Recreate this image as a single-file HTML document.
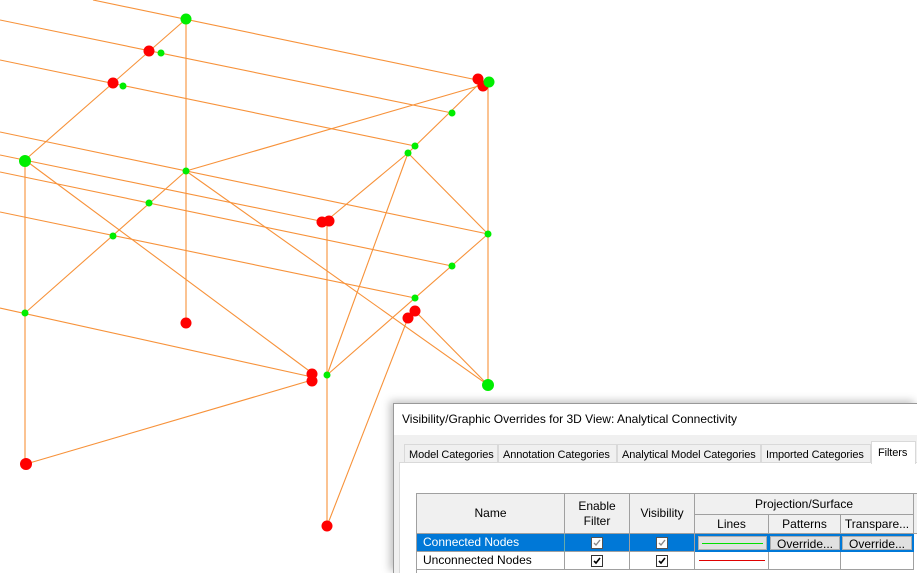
<!DOCTYPE html>
<html><head><meta charset="utf-8"><style>
*{margin:0;padding:0;box-sizing:border-box}
html,body{width:917px;height:573px;overflow:hidden}
body{background:#fff;position:relative;font-family:"Liberation Sans",sans-serif;font-size:12px;color:#000}
svg{position:absolute;left:0;top:0}
.dlg{position:absolute;left:393px;top:403px;width:524px;height:170px;background:#f0f0f0;border-left:1px solid #999;border-top:1px solid #999;box-shadow:-3px -2px 8px rgba(0,0,0,.25);overflow:hidden}
.title{position:absolute;left:0;top:0;right:0;height:31px;background:#fff;padding:8px 0 0 8px;font-size:12px}
.tab{position:absolute;top:40px;height:19px;background:#f0f0f0;border:1px solid #d9d9d9;border-bottom:none;font-size:11px;padding:4px 0 0 4px;white-space:nowrap;overflow:hidden;letter-spacing:-0.1px}
.content{position:absolute;left:5px;top:58px;width:530px;height:130px;background:#fff;border:1px solid #d9d9d9}
.c{position:absolute;border-right:1px solid #a0a0a0;border-bottom:1px solid #a0a0a0;font-size:12px;display:flex;align-items:center;justify-content:center;text-align:center;line-height:15px}
.h{background:#f0f0f0}
.cb{width:12px;height:12px;border:1px solid #333;background:#fff;display:flex;align-items:center;justify-content:center}
.btn{position:absolute;background:#e1e1e1;border:1px solid #adadad;font-size:12px;text-align:center;line-height:14px}
</style></head><body>
<svg width="917" height="573" viewBox="0 0 917 573">
<g stroke="#f7923a" stroke-width="1.1" fill="none">
<line x1="93" y1="0" x2="482" y2="81"/>
<line x1="0" y1="20" x2="452" y2="113"/>
<line x1="0" y1="60" x2="415" y2="146"/>
<line x1="0" y1="132" x2="488" y2="234"/>
<line x1="0" y1="155" x2="325" y2="222"/>
<line x1="0" y1="172" x2="452" y2="266"/>
<line x1="0" y1="212" x2="415" y2="298"/>
<line x1="0" y1="308" x2="312" y2="377"/>
<line x1="26" y1="464" x2="312" y2="380"/>
<line x1="186" y1="19" x2="186" y2="323"/>
<line x1="25" y1="160" x2="25" y2="464"/>
<line x1="488" y1="81" x2="488" y2="385"/>
<line x1="327" y1="222" x2="327" y2="526"/>
<line x1="186" y1="19" x2="25" y2="160"/>
<line x1="482" y1="81" x2="408" y2="153"/>
<line x1="186" y1="171" x2="25" y2="313"/>
<line x1="488" y1="234" x2="327" y2="375"/>
<line x1="186" y1="171" x2="482" y2="85"/>
<line x1="408" y1="153" x2="325" y2="222"/>
<line x1="408" y1="153" x2="488" y2="234"/>
<line x1="408" y1="153" x2="327" y2="375"/>
<line x1="25" y1="160" x2="312" y2="373"/>
<line x1="186" y1="171" x2="488" y2="385"/>
<line x1="415" y1="311" x2="488" y2="385"/>
<line x1="408" y1="318" x2="327" y2="526"/>
</g>
<g fill="#ff0000">
<circle cx="149" cy="51" r="5.5"/><circle cx="113" cy="83" r="5.5"/>
<circle cx="478" cy="79" r="5.5"/><circle cx="483" cy="86" r="5.5"/>
<circle cx="322" cy="222" r="5.5"/><circle cx="329" cy="221" r="5.5"/>
<circle cx="415" cy="311" r="5.5"/><circle cx="408" cy="318" r="5.5"/>
<circle cx="186" cy="323" r="5.5"/>
<circle cx="312" cy="374" r="5.5"/><circle cx="312" cy="381" r="5.5"/>
<circle cx="26" cy="464" r="6"/><circle cx="327" cy="526" r="5.5"/>
</g>
<g fill="#00ee00">
<circle cx="186" cy="19" r="5.5"/><circle cx="489" cy="82" r="5.5"/>
<circle cx="25" cy="161" r="6"/><circle cx="488" cy="385" r="6"/>
<circle cx="161" cy="53" r="3.5"/><circle cx="123" cy="86" r="3.5"/>
<circle cx="452" cy="113" r="3.5"/><circle cx="415" cy="146" r="3.5"/><circle cx="408" cy="153" r="3.5"/>
<circle cx="186" cy="171" r="3.5"/><circle cx="149" cy="203" r="3.5"/><circle cx="113" cy="236" r="3.5"/>
<circle cx="488" cy="234" r="3.5"/><circle cx="452" cy="266" r="3.5"/><circle cx="415" cy="298" r="3.5"/>
<circle cx="25" cy="313" r="3.5"/><circle cx="327" cy="375" r="3.5"/>
</g>
</svg>
<div class="dlg">
<div class="title">Visibility/Graphic Overrides for 3D View: Analytical Connectivity</div>
<div class="tab" style="left:10px;width:94px">Model Categories</div>
<div class="tab" style="left:104px;width:119px">Annotation Categories</div>
<div class="tab" style="left:223px;width:144px">Analytical Model Categories</div>
<div class="tab" style="left:367px;width:110px">Imported Categories</div>
<div class="content"></div>
<div class="tab" style="left:477px;top:37px;width:45px;height:23px;background:#fff;border-color:#d9d9d9;padding-top:5px;padding-left:6px;z-index:2">Filters</div>
</div>
<div style="position:absolute;left:416px;top:493px;width:501px;height:80px;border-left:1px solid #a0a0a0;border-top:1px solid #a0a0a0;overflow:hidden">
<div class="c h" style="left:0;top:0;width:148px;height:40px">Name</div>
<div class="c h" style="left:148px;top:0;width:65px;height:40px">Enable<br>Filter</div>
<div class="c h" style="left:213px;top:0;width:65px;height:40px">Visibility</div>
<div class="c h" style="left:278px;top:0;width:219px;height:21px">Projection/Surface</div>
<div class="c h" style="left:278px;top:21px;width:74px;height:19px">Lines</div>
<div class="c h" style="left:352px;top:21px;width:72px;height:19px">Patterns</div>
<div class="c h" style="left:424px;top:21px;width:73px;height:19px">Transpare...</div>
<div class="c h" style="left:497px;top:0;width:10px;height:40px"></div>
<div style="position:absolute;left:0;top:40px;width:497px;height:18px;background:#0078d7"></div>
<div class="c" style="left:0;top:40px;width:148px;height:18px;justify-content:flex-start;padding-left:6px;color:#fff;border-right-color:#6aa">Connected Nodes</div>
<div class="c" style="left:148px;top:40px;width:65px;height:18px"><div class="cb" style="border-color:#555"><svg width="10" height="10" style="position:static"><path d="M2 5l2 2 4-5" stroke="#888" stroke-width="1.4" fill="none"/></svg></div></div>
<div class="c" style="left:213px;top:40px;width:65px;height:18px"><div class="cb" style="border-color:#555"><svg width="10" height="10" style="position:static"><path d="M2 5l2 2 4-5" stroke="#888" stroke-width="1.4" fill="none"/></svg></div></div>
<div class="btn" style="left:281px;top:42px;width:69px;height:14px"><div style="margin:6px 3px 0;height:1px;background:#00e000"></div></div>
<div class="btn" style="left:353px;top:42px;width:70px;height:14px">Override...</div>
<div class="btn" style="left:425px;top:42px;width:70px;height:14px">Override...</div>
<div class="c" style="left:0;top:58px;width:148px;height:18px;justify-content:flex-start;padding-left:6px">Unconnected Nodes</div>
<div class="c" style="left:148px;top:58px;width:65px;height:18px"><div class="cb"><svg width="10" height="10" style="position:static"><path d="M2 5l2 2 4-5" stroke="#000" stroke-width="1.6" fill="none"/></svg></div></div>
<div class="c" style="left:213px;top:58px;width:65px;height:18px"><div class="cb"><svg width="10" height="10" style="position:static"><path d="M2 5l2 2 4-5" stroke="#000" stroke-width="1.6" fill="none"/></svg></div></div>
<div class="c" style="left:278px;top:58px;width:74px;height:18px"><div style="width:66px;height:1px;background:#e00000"></div></div>
<div class="c" style="left:352px;top:58px;width:72px;height:18px"></div>
<div class="c" style="left:424px;top:58px;width:73px;height:18px"></div>
</div>
</body></html>
